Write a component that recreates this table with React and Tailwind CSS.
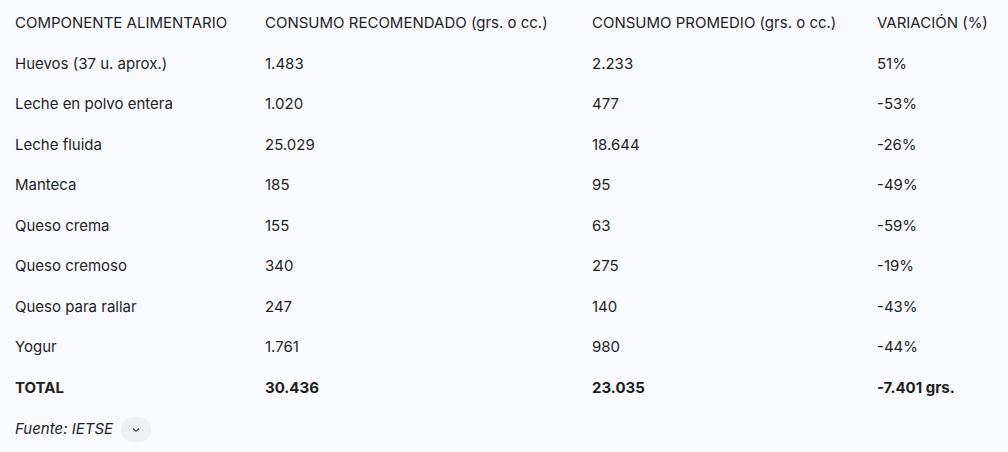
const rows = [
  ["Huevos (37 u. aprox.)", "1.483", "2.233", "51%"],
  ["Leche en polvo entera", "1.020", "477", "-53%"],
  ["Leche fluida", "25.029", "18.644", "-26%"],
  ["Manteca", "185", "95", "-49%"],
  ["Queso crema", "155", "63", "-59%"],
  ["Queso cremoso", "340", "275", "-19%"],
  ["Queso para rallar", "247", "140", "-43%"],
  ["Yogur", "1.761", "980", "-44%"],
];

function Row({ cells, bold }) {
  return (
    <div className={`grid grid-cols-[250px_327px_285px_1fr] h-[40.5px] items-center ${bold ? "font-bold" : ""}`}>
      {cells.map((c, i) => (
        <div key={i} className="whitespace-nowrap">{c}</div>
      ))}
    </div>
  );
}

export default function App() {
  return (
    <div
      className="w-[1008px] h-[452px] bg-[#f8fafd] text-[#1f1f1f] text-[15px] pl-[15px] pt-[3px]"
      style={{ fontFamily: "Inter, Roboto, sans-serif" }}
    >
      <Row cells={["COMPONENTE ALIMENTARIO", "CONSUMO RECOMENDADO (grs. o cc.)", "CONSUMO PROMEDIO (grs. o cc.)", "VARIACIÓN (%)"]} />
      {rows.map((r) => (
        <Row key={r[0]} cells={r} />
      ))}
      <Row cells={["TOTAL", "30.436", "23.035", "-7.401 grs."]} bold />
      <div className="flex items-center gap-[8px] mt-[9px]">
        <span className="italic">Fuente: IETSE</span>
        <span className="w-[30px] h-[25px] rounded-full bg-[#eef0f4] flex items-center justify-center">
          <svg width="12" height="12" viewBox="0 0 12 12" fill="none" stroke="#555" strokeWidth="1.3">
            <path d="M3 4.5 L6 7.2 L9 4.5" />
          </svg>
        </span>
      </div>
    </div>
  );
}
